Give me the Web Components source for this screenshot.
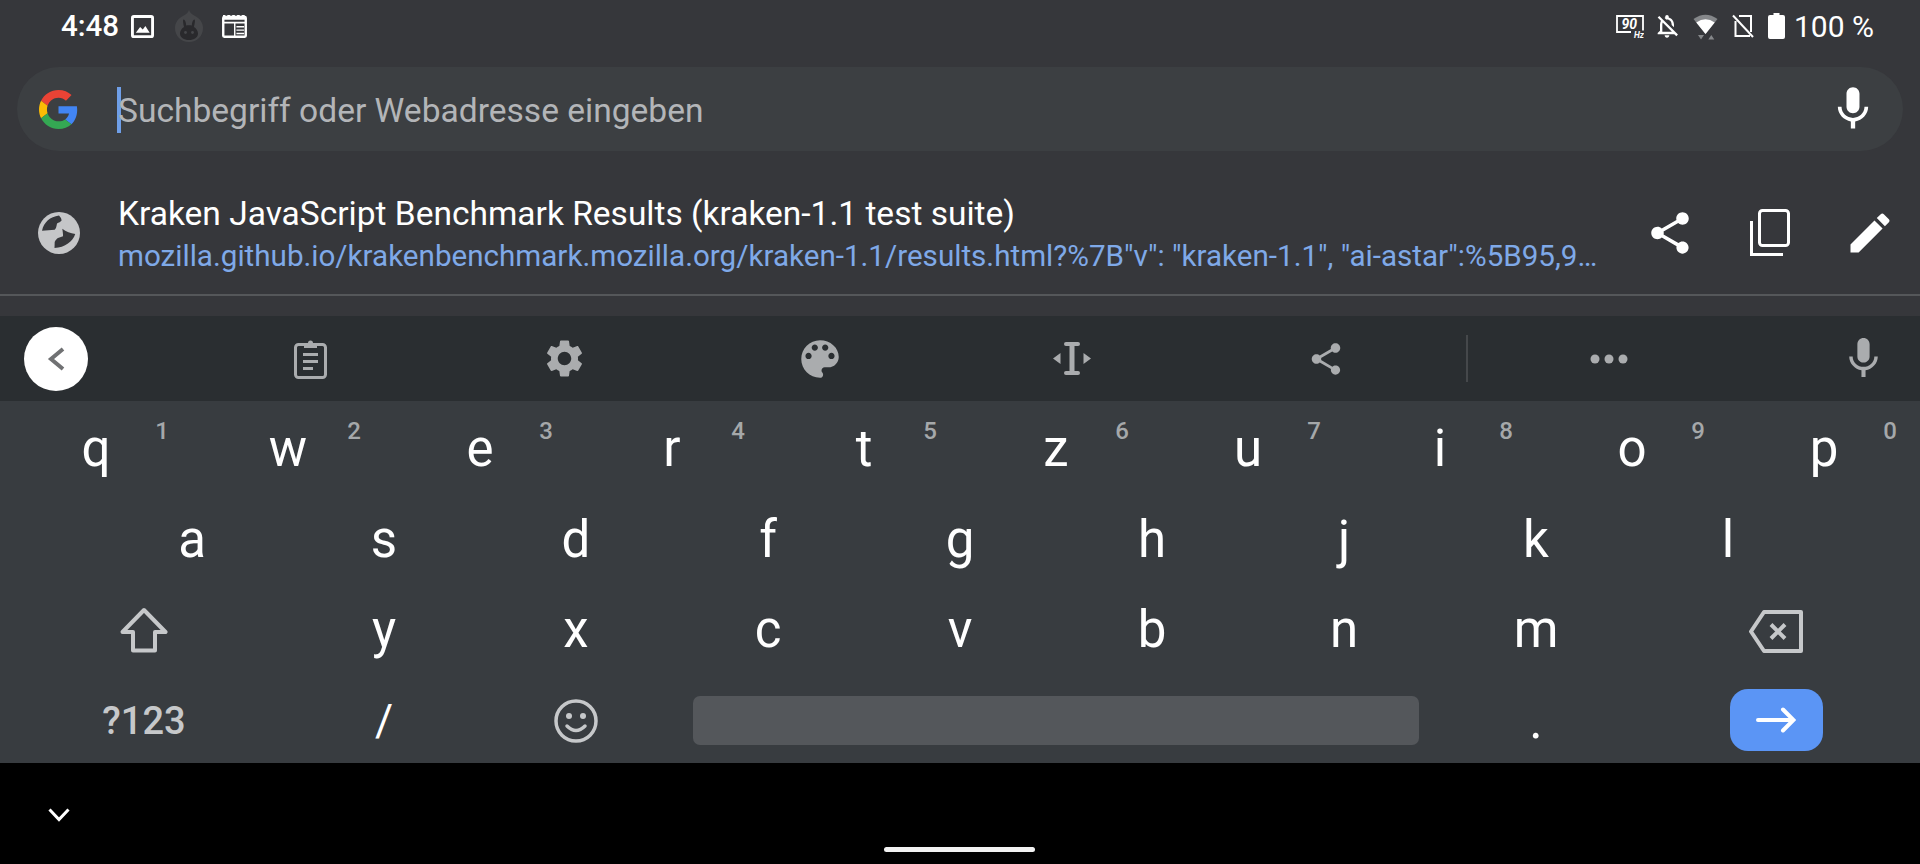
<!DOCTYPE html>
<html lang="de"><head><meta charset="utf-8"><title>Kraken</title>
<style>
html,body{margin:0;padding:0;background:#000;width:1920px;height:864px;overflow:hidden;font-family:Roboto,"Liberation Sans",sans-serif}
</style></head><body>
<x-app>
  <x-status></x-status>
  <x-search placeholder="Suchbegriff oder Webadresse eingeben"></x-search>
  <x-result title-text="Kraken JavaScript Benchmark Results (kraken-1.1 test suite)" url="mozilla.github.io/krakenbenchmark.mozilla.org/kraken-1.1/results.html?%7B&quot;v&quot;: &quot;kraken-1.1&quot;, &quot;ai-astar&quot;:%5B95,9…"></x-result>
  <x-toolbar></x-toolbar>
  <x-keyboard>
    <x-row>
      <x-key hint="1">q</x-key><x-key hint="2">w</x-key><x-key hint="3">e</x-key><x-key hint="4">r</x-key><x-key hint="5">t</x-key><x-key hint="6">z</x-key><x-key hint="7">u</x-key><x-key hint="8">i</x-key><x-key hint="9">o</x-key><x-key hint="0">p</x-key>
    </x-row>
    <x-row indent>
      <x-key>a</x-key><x-key>s</x-key><x-key>d</x-key><x-key>f</x-key><x-key>g</x-key><x-key>h</x-key><x-key>j</x-key><x-key>k</x-key><x-key>l</x-key>
    </x-row>
    <x-row>
      <x-key wide><x-icon name="shift" w="48" h="46"></x-icon></x-key>
      <x-key>y</x-key><x-key>x</x-key><x-key>c</x-key><x-key>v</x-key><x-key>b</x-key><x-key>n</x-key><x-key>m</x-key>
      <x-key wide><x-icon name="backspace" w="54" h="43" style="margin-top:3px"></x-icon></x-key>
    </x-row>
    <x-row>
      <x-key wide small>?123</x-key>
      <x-key slash>/</x-key>
      <x-key><x-icon name="emoji" w="44" h="44"></x-icon></x-key>
      <x-space></x-space>
      <x-key>.</x-key>
      <x-key wide flat><x-enter></x-enter></x-key>
    </x-row>
  </x-keyboard>
  <x-nav></x-nav>
</x-app>
<script>
const MAT = {
 share:'M18 16.08c-.76 0-1.44.3-1.96.77L8.91 12.7c.05-.23.09-.46.09-.7s-.04-.47-.09-.7l7.05-4.11c.54.5 1.25.81 2.04.81 1.66 0 3-1.34 3-3s-1.34-3-3-3-3 1.34-3 3c0 .24.04.47.09.7L8.04 9.81C7.5 9.31 6.79 9 6 9c-1.66 0-3 1.34-3 3s1.34 3 3 3c.79 0 1.5-.31 2.04-.81l7.12 4.16c-.05.21-.08.43-.08.65 0 1.61 1.31 2.92 2.92 2.92 1.61 0 2.92-1.31 2.92-2.92s-1.31-2.92-2.92-2.92z',
 edit:'M3 17.25V21h3.75L17.81 9.94l-3.75-3.75L3 17.25zM20.71 7.04c.39-.39.39-1.02 0-1.41l-2.34-2.34c-.39-.39-1.02-.39-1.41 0l-1.83 1.83 3.75 3.75 1.83-1.83z',
 mic:'M12 14c1.66 0 2.99-1.34 2.99-3L15 5c0-1.66-1.34-3-3-3S9 3.34 9 5v6c0 1.66 1.34 3 3 3zm5.3-3c0 3-2.54 5.1-5.3 5.1S6.7 14 6.7 11H5c0 3.41 2.72 6.23 6 6.72V21h2v-3.28c3.28-.48 6-3.3 6-6.72h-1.7z',
 gear:'M19.14 12.94c.04-.3.06-.61.06-.94 0-.32-.02-.64-.07-.94l2.03-1.58c.18-.14.23-.41.12-.61l-1.92-3.32c-.12-.22-.37-.29-.59-.22l-2.39.96c-.5-.38-1.03-.7-1.62-.94l-.36-2.54c-.04-.24-.24-.41-.48-.41h-3.84c-.24 0-.43.17-.47.41l-.36 2.54c-.59.24-1.13.57-1.62.94l-2.39-.96c-.22-.08-.47 0-.59.22L2.74 8.87c-.12.21-.08.47.12.61l2.03 1.58c-.05.3-.09.63-.09.94s.02.64.07.94l-2.03 1.58c-.18.14-.23.41-.12.61l1.92 3.32c.12.22.37.29.59.22l2.39-.96c.5.38 1.03.7 1.62.94l.36 2.54c.05.24.24.41.48.41h3.84c.24 0 .44-.17.47-.41l.36-2.54c.59-.24 1.13-.56 1.62-.94l2.39.96c.22.08.47 0 .59-.22l1.92-3.32c.12-.22.07-.47-.12-.61l-2.01-1.58zM12 15.6c-1.98 0-3.6-1.62-3.6-3.6s1.62-3.6 3.6-3.6 3.6 1.62 3.6 3.6-1.62 3.6-3.6 3.6z',
 palette:'M12 3c-4.97 0-9 4.03-9 9s4.03 9 9 9c.83 0 1.5-.67 1.5-1.5 0-.39-.15-.74-.39-1.01-.23-.26-.38-.61-.38-.99 0-.83.67-1.5 1.5-1.5H16c2.76 0 5-2.24 5-5 0-4.42-4.03-8-9-8zm-5.5 9c-.83 0-1.5-.67-1.5-1.5S5.67 9 6.5 9 8 9.67 8 10.5 7.33 12 6.5 12zm3-4C8.67 8 8 7.33 8 6.5S8.67 5 9.5 5s1.5.67 1.5 1.5S10.33 8 9.5 8zm5 0c-.83 0-1.5-.67-1.5-1.5S13.67 5 14.5 5s1.5.67 1.5 1.5S15.33 8 14.5 8zm3 4c-.83 0-1.5-.67-1.5-1.5S16.67 9 17.5 9s1.5.67 1.5 1.5-.67 1.5-1.5 1.5z',
 belloff:'M12 22c1.1 0 2-.9 2-2h-4c0 1.1.9 2 2 2zm0-15.5c2.49 0 4 2.02 4 4.5v.1l2 2V11c0-3.07-1.63-5.64-4.5-6.32V4c0-.83-.67-1.5-1.5-1.5s-1.5.67-1.5 1.5v.68c-.24.06-.47.15-.69.23l1.64 1.64c.18-.02.36-.05.55-.05zM5.41 3.35L4 4.76l2.81 2.81C6.29 8.57 6 9.74 6 11v5l-2 2v1h14.24l1.74 1.74 1.41-1.41L5.41 3.35zM16 17H8v-6c0-.68.12-1.32.34-1.9L16 16.76V17z'
};
const mat = (k,f='currentColor') => `<svg viewBox="0 0 24 24"><path fill="${f}" fill-rule="evenodd" d="${MAT[k]}"/></svg>`;
const RAW = {
 share:mat('share'), edit:mat('edit'), mic:mat('mic'), gear:mat('gear'), palette:mat('palette'), belloff:mat('belloff'),
 copy:`<svg viewBox="0 0 40 47"><rect x="9.5" y="1.5" width="29" height="35" rx="3" fill="none" stroke="currentColor" stroke-width="3"/><path d="M1.5 12V45.5H33" fill="none" stroke="currentColor" stroke-width="3"/></svg>`,
 globe:`<svg viewBox="0 0 42 42"><circle cx="21" cy="21" r="21" fill="#c5c6c8"/><path fill="#36373b" d="M21 3.6C12 5 6 10 4 18.8L16.7 17.7C18 16.6 18.4 14.6 19 11.4 20.6 10.6 23 9.6 23.6 8.4 23.4 6.4 22 4.6 21 3.6zM24.3 16.7C28 19.6 32.6 21.2 37.2 22 35 29.4 27 35.6 16.5 36L16.7 30C17.6 28 19 26.6 20 26L25 24.3C25.2 22 24.6 19 24.3 16.7z"/></svg>`,
 image:`<svg viewBox="0 0 24 24"><rect x="1.5" y="1.5" width="21" height="21" rx="1.5" fill="none" stroke="#fff" stroke-width="3"/><path fill="#fff" d="M5 18.5L9.5 12.5 12.3 15.2 15 11.5 19.5 18.5z"/></svg>`,
 bunny:`<svg viewBox="0 0 28 32"><path fill="#454649" d="M14 0C15 3 17 4.5 20 6 25 8.5 28 13 28 18 28 26 22 32 14 32 6 32 0 26 0 18 0 13 3 8.5 8 6 11 4.5 13 3 14 0z"/><path fill="#29292c" d="M8.5 9.5C10 9.5 11 12 11.2 15.5 12.8 15 15.2 15 16.8 15.5 17 12 18 9.5 19.5 9.5 20.5 10 19.6 14 19 17 21.5 18.5 23 21 23 23.5 23 27.5 19 30 14 30 9 30 5 27.5 5 23.5 5 21 6.5 18.5 9 17 8.4 14 7.5 10 8.5 9.5z"/><circle cx="10.5" cy="22.5" r="1.4" fill="#454649"/><circle cx="17.5" cy="22.5" r="1.4" fill="#454649"/></svg>`,
 news:`<svg viewBox="0 0 26 24"><path fill="#fff" d="M1 0h2l1.500 1.500L6 0h2l1.500 1.500L11 0h2l1.500 1.500L16 0h2l1.500 1.500L21 0h2l2 1.500V5H1z"/><rect x="1.250" y="2" width="23.500" height="20.750" rx="1" fill="none" stroke="#fff" stroke-width="2.500"/><path fill="#fff" d="M2 7h22v1.800H2zM15 11.500h8v1.500h-8zM15 15h8v1.500h-8zM15 18.500h8v1.500h-8zM12.500 8h1.500v14h-1.500z"/></svg>`,
 hz:`<svg viewBox="0 0 28 23"><path fill="none" stroke="#fff" stroke-width="1.800" d="M27 15.500V1H1v16h14"/><text x="5.500" y="14" font-family="Roboto,sans-serif" font-size="14" font-weight="700" font-style="italic" fill="#fff">90</text><text x="18" y="22.500" font-family="Roboto,sans-serif" font-size="8.500" font-weight="700" font-style="italic" fill="#fff">Hz</text></svg>`,
 wifi:`<svg viewBox="0 0 25 27"><path fill="#85878a" d="M.5 6Q12.5-2.500 24.500 6L12.500 21z"/><path fill="#fff" d="M3.300 9.500Q12.500 3 21.700 9.500L12.500 21z"/><path fill="#85878a" d="M5 22h6l-3 4.500zM15.300 26.500h6l-3-4.500z"/></svg>`,
 simoff:`<svg viewBox="0 0 22 24"><path fill="none" stroke="#fff" stroke-width="2" d="M7 2H19V18M3.500 7V22H18"/><path stroke="#fff" stroke-width="2" d="M1 1.500L21 23"/></svg>`,
 battery:`<svg viewBox="0 0 17 26"><path fill="#fff" d="M5.500 0h6v2H15a2 2 0 0 1 2 2v20a2 2 0 0 1-2 2H2a2 2 0 0 1-2-2V4a2 2 0 0 1 2-2h3.500z"/></svg>`,
 g:`<svg viewBox="0 0 48 48"><path fill="#EA4335" d="M24 9.500c3.540 0 6.710 1.220 9.210 3.600l6.850-6.850C35.900 2.380 30.470 0 24 0 14.620 0 6.510 5.380 2.560 13.220l7.980 6.190C12.430 13.720 17.740 9.500 24 9.500z"/><path fill="#4285F4" d="M46.980 24.550c0-1.570-.15-3.090-.38-4.550H24v9.020h12.940c-.58 2.960-2.260 5.480-4.780 7.180l7.730 6c4.510-4.180 7.090-10.360 7.090-17.650z"/><path fill="#FBBC05" d="M10.530 28.590c-.48-1.450-.76-2.990-.76-4.590s.27-3.140.76-4.590l-7.980-6.190C.92 16.460 0 20.120 0 24c0 3.880.92 7.540 2.560 10.780l7.970-6.190z"/><path fill="#34A853" d="M24 48c6.480 0 11.930-2.130 15.890-5.810l-7.730-6c-2.150 1.450-4.920 2.300-8.160 2.300-6.260 0-11.570-4.220-13.470-9.910l-7.980 6.190C6.510 42.620 14.620 48 24 48z"/></svg>`,
 clip:`<svg viewBox="0 0 33 40"><rect x="1.500" y="5.500" width="30" height="33" rx="3" fill="none" stroke="currentColor" stroke-width="3"/><path fill="currentColor" d="M10 4h4a2.500 2.500 0 0 1 5 0h4v5H10zM9 14h15v3H9zM9 21h15v3H9zM9 28h10v3H9z"/></svg>`,
 cursor:`<svg viewBox="0 0 38 33"><path fill="currentColor" d="M13 0h12a1.500 1.500 0 0 1 0 4h-3.500V29H25a1.500 1.500 0 0 1 0 4H13a1.500 1.500 0 0 1 0-4h3.500V4H13a1.500 1.500 0 0 1 0-4zM7.500 11v11L0 16.500zM30.500 11v11L38 16.500z"/></svg>`,
 dots:`<svg viewBox="0 0 38 10"><circle cx="5" cy="5" r="4.500" fill="currentColor"/><circle cx="19" cy="5" r="4.500" fill="currentColor"/><circle cx="33" cy="5" r="4.500" fill="currentColor"/></svg>`,
 shift:`<svg viewBox="0 0 48 46"><path fill="none" stroke="#c6c8ca" stroke-width="4" stroke-linejoin="round" d="M24 3L45.500 25H35V43.500H13V25H2.500z"/></svg>`,
 backspace:`<svg viewBox="0 0 54 43"><path fill="none" stroke="#c6c8ca" stroke-width="4" stroke-linejoin="round" d="M15 2H52V41H15L2 21.500z"/><path fill="none" stroke="#c6c8ca" stroke-width="4" d="M22 14.500L36 28.500M36 14.500L22 28.500"/></svg>`,
 emoji:`<svg viewBox="0 0 44 44"><circle cx="22" cy="22" r="20" fill="none" stroke="#c6c8ca" stroke-width="3.500"/><circle cx="15" cy="17" r="3" fill="#c6c8ca"/><circle cx="29" cy="17" r="3" fill="#c6c8ca"/><path fill="none" stroke="#c6c8ca" stroke-width="3.500" stroke-linecap="round" d="M13 27Q22 36 31 27"/></svg>`,
 arrow:`<svg viewBox="0 0 40 26"><path fill="none" stroke="#fff" stroke-width="4" stroke-linecap="round" d="M2 13H37M27 2.500L37.500 13 27 23.500"/></svg>`,
 back:`<svg viewBox="0 0 18 24"><path fill="none" stroke="#707173" stroke-width="4" d="M16 2L4 12 16 22"/></svg>`,
 down:`<svg viewBox="0 0 22 14"><path fill="none" stroke="#fff" stroke-width="3" d="M1.500 1.500L11 11.500 20.500 1.500"/></svg>`
};
function define(name, css, html){
  customElements.define(name, class extends HTMLElement{
    constructor(){super();this.attachShadow({mode:'open'});}
    connectedCallback(){
      const h = typeof html==='function'?html(this):html;
      this.shadowRoot.innerHTML = `<style>${css}</style>${h}`;
    }
  });
}
define('x-icon',`:host{display:inline-flex;flex:none;align-items:center;justify-content:center;line-height:0}svg{display:block;width:100%;height:100%}`,
  el=>{el.style.width=(el.getAttribute('w')||24)+'px';el.style.height=(el.getAttribute('h')||el.getAttribute('w')||24)+'px';return RAW[el.getAttribute('name')];});
define('x-app',`:host{display:flex;flex-direction:column;width:1920px;height:864px;background:#36373b;color:#fff;font-family:Roboto,"Liberation Sans",sans-serif}`,`<slot></slot>`);
define('x-status',`
 :host{display:flex;align-items:flex-start;height:54px;padding:0 46px 0 61px;box-sizing:border-box;color:#fff;flex:none}
 .t{font-size:29.500px;font-weight:500;line-height:53px;width:57px;white-space:nowrap;margin-right:13px}
 .left,.right{display:flex;align-items:center;height:52px}
 .right{margin-left:auto}
 .p{font-size:30px;line-height:53px;font-weight:400;white-space:nowrap;margin-left:9px}
`,`<div class="left"><span class="t">4:48</span><x-icon name="image" w="23"></x-icon><x-icon name="bunny" w="28" h="32" style="margin-left:21px"></x-icon><x-icon name="news" w="25" h="23" style="margin-left:19px"></x-icon></div>
<div class="right"><x-icon name="hz" w="28" h="23"></x-icon><x-icon name="belloff" w="28" style="margin-left:9px"></x-icon><x-icon name="wifi" w="25" h="27" style="margin-left:12px"></x-icon><x-icon name="simoff" w="22" h="24" style="margin-left:14px"></x-icon><x-icon name="battery" w="17" h="26" style="margin-left:14px"></x-icon><span class="p">100 %</span></div>`);
define('x-search',`
 :host{display:flex;align-items:center;flex:none;height:84px;margin:13px 17px 0;border-radius:42px;background:#3c3f42;box-sizing:border-box;padding-left:22px}
 .c{width:4px;height:46px;background:#6f9fe8;flex:none;margin-left:39px;margin-right:-3px;margin-top:2px}
 .ph{font-size:33.560px;color:#b3b5b8;white-space:nowrap;line-height:46px;margin-top:3px}
`,el=>`<x-icon name="g" w="39"></x-icon><span class="c"></span><span class="ph">${el.getAttribute('placeholder')}</span><x-icon name="mic" w="52" style="margin-left:auto;margin-right:24px"></x-icon>`);
define('x-result',`
 :host{display:flex;flex:none;height:145px;box-sizing:border-box;border-bottom:2px solid #55575a;align-items:center;padding:20px 0 0 38px;color:#fff}
 .txt{flex:1;min-width:0;white-space:nowrap;align-self:flex-start}
 .a{font-size:33.500px;line-height:43px;color:#fff;margin-top:21px}
 .u{font-size:29.600px;line-height:43px;color:#7fa9e8}
 .i{flex:none;width:100px;display:flex;justify-content:center;align-items:center;color:#fff}
`,el=>{const e=s=>s.replace(/&/g,'&amp;').replace(/</g,'&lt;');return `<x-icon name="globe" w="42" style="margin-right:38px"></x-icon><div class="txt"><div class="a">${e(el.getAttribute('title-text'))}</div><div class="u">${e(el.getAttribute('url'))}</div></div><div class="i"><x-icon name="share" w="50"></x-icon></div><div class="i"><x-icon name="copy" w="40" h="47"></x-icon></div><div class="i"><x-icon name="edit" w="52"></x-icon></div>`});
define('x-toolbar',`
 :host{display:flex;flex:none;align-items:center;height:85px;margin-top:20px;background:#2a2e31;color:#aaacae;box-sizing:border-box;padding-left:24px}
 .b{flex:none;width:64px;height:64px;border-radius:50%;background:#fff;display:flex;align-items:center;justify-content:center;margin-right:95px}
 .c{flex:none;width:254px;display:flex;justify-content:center}
 .d{flex:none;width:2px;height:47px;background:#45484b;margin-left:13px}
 .e{flex:none;width:282px;display:flex;justify-content:center}
 .f{flex:none;width:226px;display:flex;justify-content:center}
`,`<div class="b"><x-icon name="back" w="18" h="24"></x-icon></div>
<div class="c"><x-icon name="clip" w="33" h="40"></x-icon></div><div class="c"><x-icon name="gear" w="45"></x-icon></div><div class="c"><x-icon name="palette" w="50" style="margin-left:3px"></x-icon></div><div class="c"><x-icon name="cursor" w="38" h="33"></x-icon></div><div class="c"><x-icon name="share" w="38"></x-icon></div>
<div class="d"></div><div class="e"><x-icon name="dots" w="38" h="10"></x-icon></div><div class="f"><x-icon name="mic" w="49"></x-icon></div>`);
define('x-keyboard',`:host{display:grid;grid-template-rows:repeat(4,90.5px);flex:none;height:362px;background:#383c40}`,`<slot></slot>`);
define('x-row',`:host{display:flex;min-width:0}:host([indent]){padding-left:96px}`,`<slot></slot>`);
define('x-key',`
 :host{flex:none;width:192px;display:flex;align-items:center;justify-content:center;position:relative;font-size:51px;color:#fff;box-sizing:border-box;line-height:60px}
 :host([wide]){width:288px}
 :host([small]){font-size:38px;color:#c6c8ca;font-weight:500}
 :host([slash]){font-size:44px}
 .l{display:flex;align-items:center;justify-content:center;margin-top:6px}
 :host([flat]) .l{margin-top:4px}
 .h{position:absolute;left:152px;top:17px;width:20px;text-align:center;font-size:24px;line-height:26px;font-weight:500;color:#a5a8aa}
`,el=>`<span class="l"><slot></slot></span>${el.hasAttribute('hint')?`<span class="h">${el.getAttribute('hint')}</span>`:''}`);
define('x-space',`:host{flex:none;width:726px;height:49px;margin:6px 21px 0;border-radius:7px;background:#54575b;align-self:center}`,``);
define('x-enter',`:host{display:flex;align-items:center;justify-content:center;width:93px;height:62px;border-radius:18px;background:#5b95f5}`,`<x-icon name="arrow" w="40" h="26"></x-icon>`);
define('x-nav',`
 :host{display:block;flex:none;height:101px;background:#000;position:relative}
 x-icon{position:absolute;left:48px;top:45px}
 .h{position:absolute;left:884px;top:84px;width:151px;height:5px;border-radius:3px;background:#f2f2f2}
`,`<x-icon name="down" w="22" h="14"></x-icon><div class="h"></div>`);
</script>
</body></html>
